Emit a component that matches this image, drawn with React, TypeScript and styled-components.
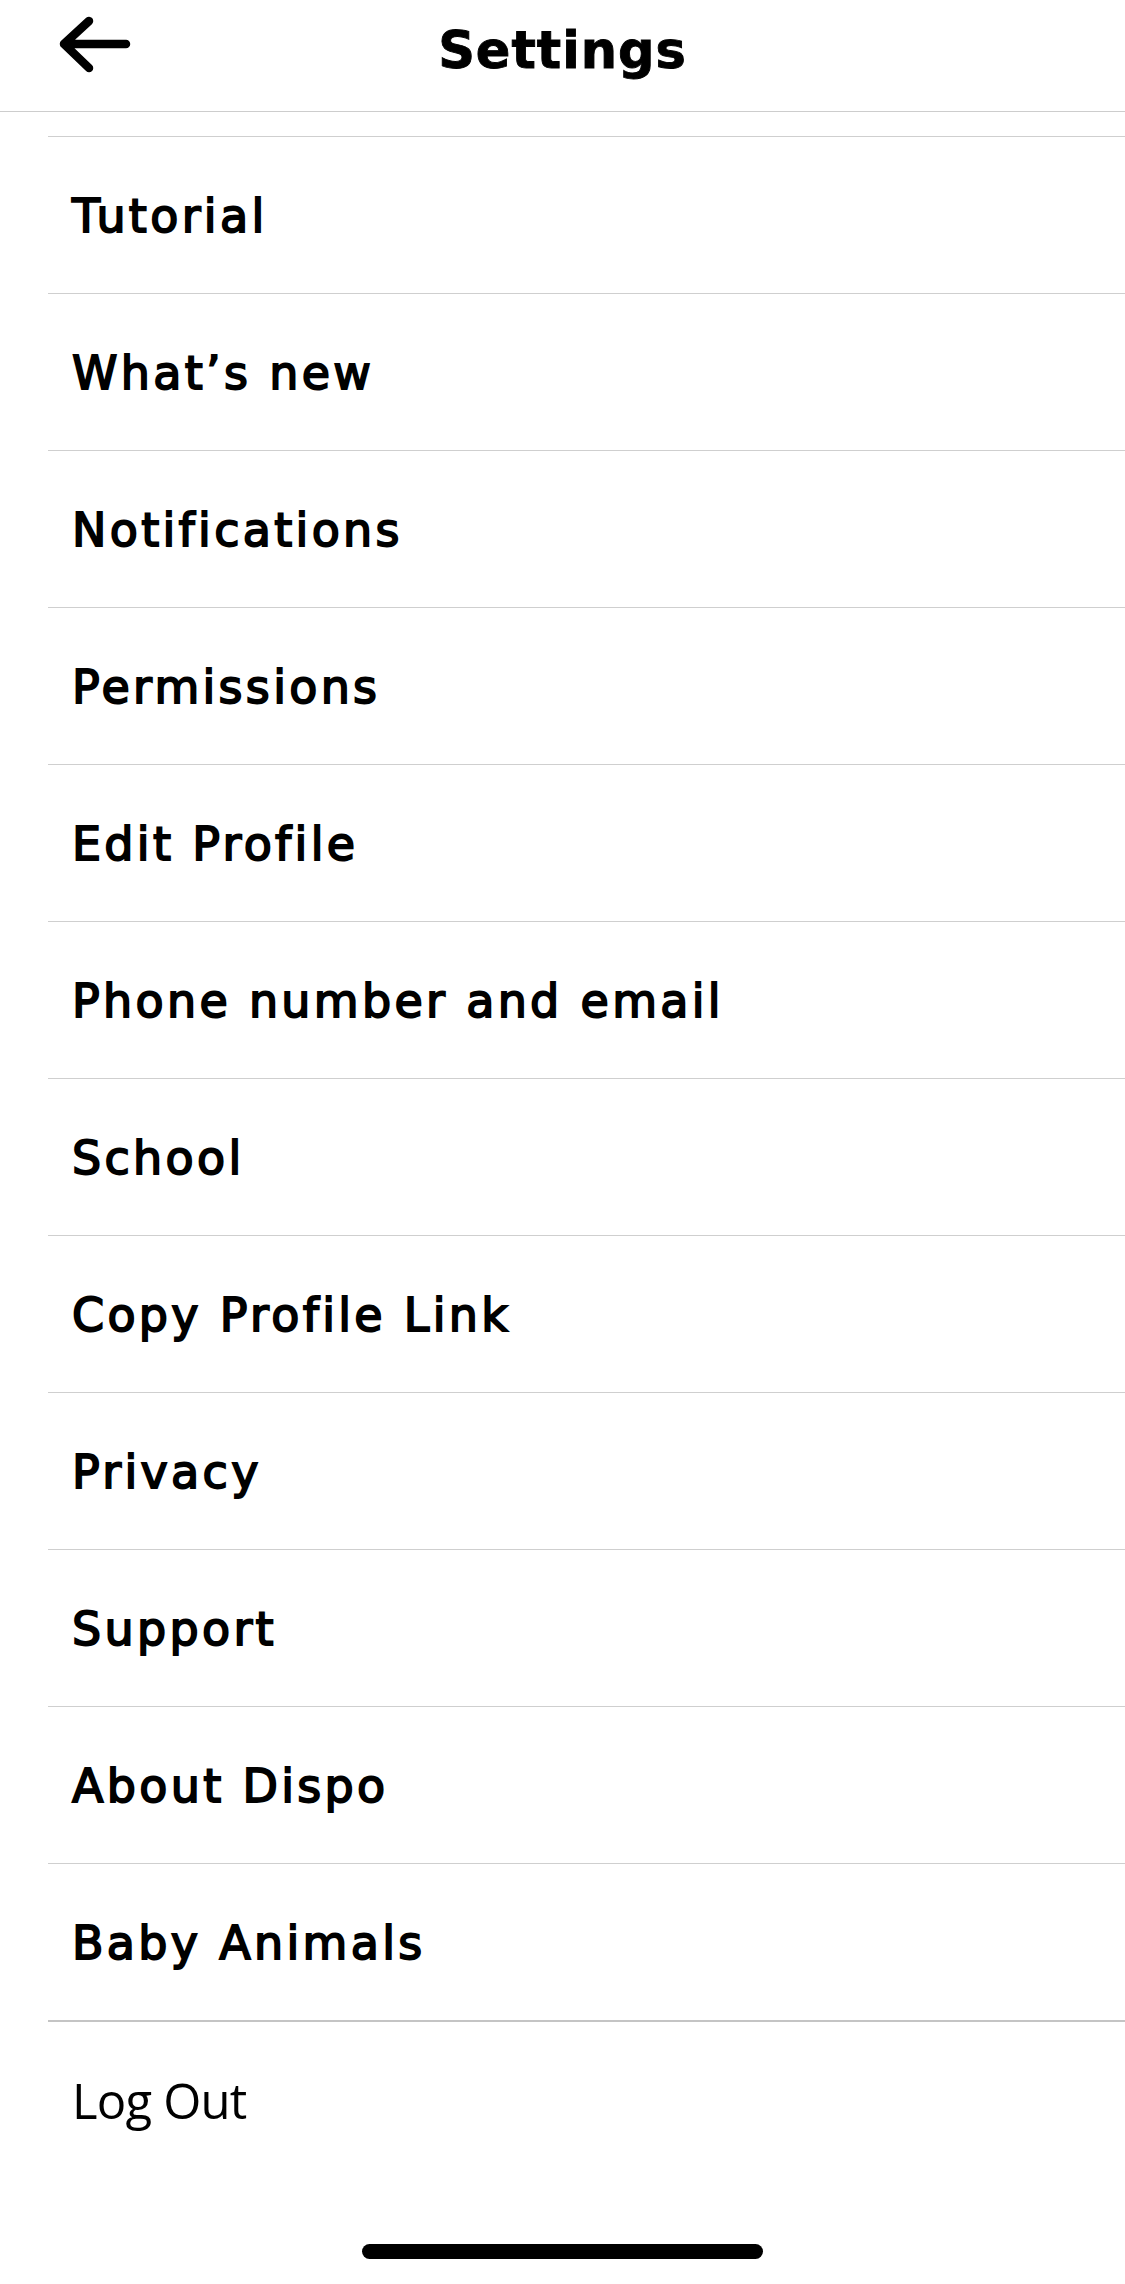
import React from "react";
import styled, { createGlobalStyle } from "styled-components";

const GlobalStyle = createGlobalStyle`
  html, body {
    margin: 0;
    padding: 0;
    background: #ffffff;
  }
  * { box-sizing: border-box; }
`;

const Screen = styled.div`
  width: 1125px;
  min-height: 2284px;
  background: #ffffff;
  display: flex;
  flex-direction: column;
  color: #000000;
`;

const Header = styled.header`
  height: 112px;
  border-bottom: 1px solid #cdcdcd;
  display: grid;
  grid-template-columns: 1fr auto 1fr;
  align-items: start;
`;

const BackButton = styled.button`
  justify-self: start;
  margin: 12px 0 0 56px;
  padding: 0;
  border: 0;
  background: transparent;
  display: flex;
  cursor: pointer;
`;

const Title = styled.h1`
  margin: 0;
  padding-top: 25px;
  font-family: "DejaVu Sans", "Liberation Sans", sans-serif;
  font-weight: 700;
  font-size: 51px;
  line-height: 1;
  letter-spacing: 1px;
  -webkit-text-stroke: 0.9px #000;
`;

const List = styled.ul`
  list-style: none;
  margin: 24px 0 0 48px;
  padding: 0;
  display: flex;
  flex-direction: column;
`;

const Row = styled.li`
  height: 157px;
  border-top: 1px solid #cfcfcf;
  padding-left: 24px;
  padding-top: 2px;
  display: flex;
  align-items: center;
  font-family: "DejaVu Sans", "Liberation Sans", sans-serif;
  font-weight: 400;
  font-size: 46px;
  letter-spacing: 3.3px;
  -webkit-text-stroke: 1.8px #000;
  cursor: pointer;
`;

const LogOutRow = styled.li`
  height: 158px;
  border-top: 2px solid #c4c4c4;
  padding-left: 24px;
  display: flex;
  align-items: center;
  font-family: "Open Sans", "Noto Sans", sans-serif;
  font-weight: 400;
  font-size: 49px;
  letter-spacing: -0.8px;
  cursor: pointer;
`;

const HomeIndicator = styled.div`
  align-self: center;
  margin-top: 66px;
  width: 401px;
  height: 15px;
  border-radius: 8px;
  background: #000000;
`;

const items = [
  "Tutorial",
  "What’s new",
  "Notifications",
  "Permissions",
  "Edit Profile",
  "Phone number and email",
  "School",
  "Copy Profile Link",
  "Privacy",
  "Support",
  "About Dispo",
  "Baby Animals",
];

const BackArrow = () => (
  <svg width="78" height="64" viewBox="0 0 78 64" fill="none">
    <path
      d="M70 32 H9 M33 9 L8 32 L33 56"
      stroke="#000"
      strokeWidth="8.5"
      strokeLinecap="round"
      strokeLinejoin="round"
    />
  </svg>
);

export default function App() {
  return (
    <>
      <GlobalStyle />
      <Screen>
        <Header>
          <BackButton aria-label="Back">
            <BackArrow />
          </BackButton>
          <Title>Settings</Title>
          <div />
        </Header>
        <List>
          {items.map((label) => (
            <Row key={label}>{label}</Row>
          ))}
          <LogOutRow>Log Out</LogOutRow>
        </List>
        <HomeIndicator />
      </Screen>
    </>
  );
}
